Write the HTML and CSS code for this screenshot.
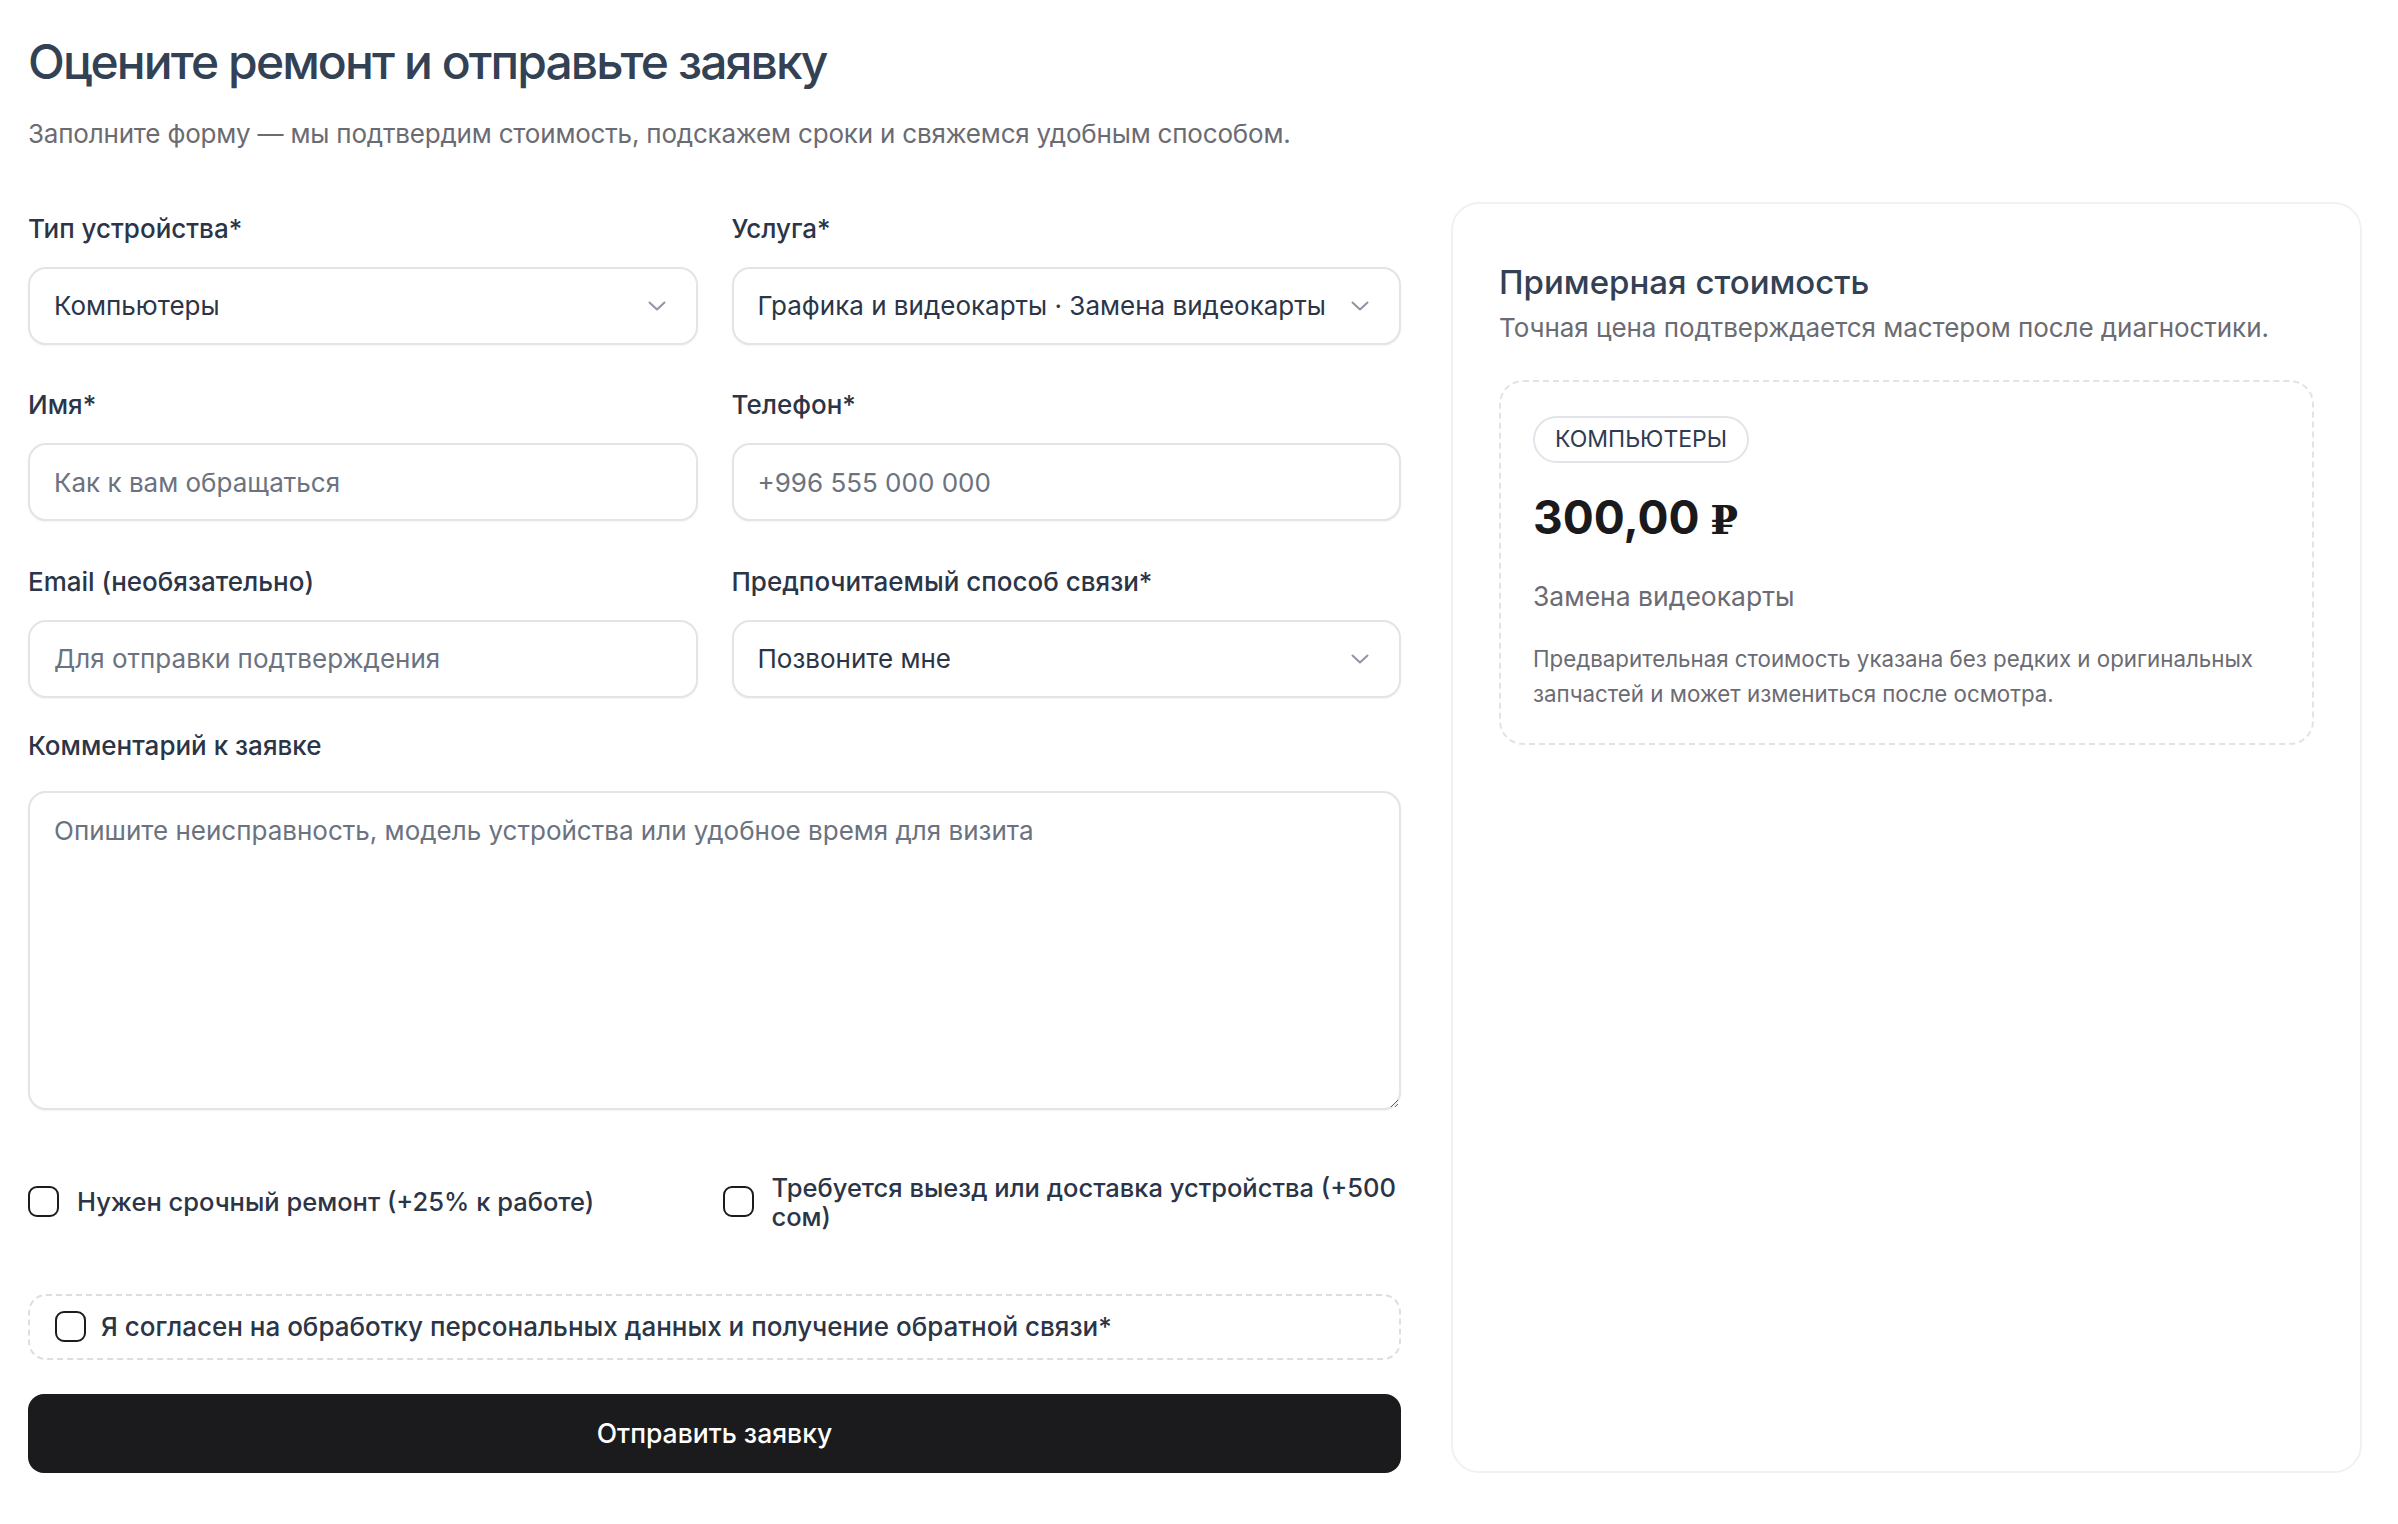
FILE: index.html
```html
<!DOCTYPE html>
<html lang="ru">
<head>
<meta charset="utf-8">
<title>Оцените ремонт и отправьте заявку</title>
<link rel="stylesheet" href="styles.css">
</head>
<body>
<div class="page">
  <header class="head">
    <h1 class="title">Оцените ремонт и отправьте заявку</h1>
    <p class="lead">Заполните форму — мы подтвердим стоимость, подскажем сроки и свяжемся удобным способом.</p>
  </header>
  <div class="layout">
    <form class="form">
      <div class="grid">
        <div class="field">
          <span class="label">Тип устройства*</span>
          <div class="control select">
            <span class="value">Компьютеры</span>
            <svg class="chev" width="18" height="10" viewBox="0 0 18 10"><path d="M1.5 1.5 L9 8.5 L16.5 1.5" fill="none" stroke="#8e95a3" stroke-width="2" stroke-linecap="round" stroke-linejoin="round"/></svg>
          </div>
        </div>
        <div class="field">
          <span class="label">Услуга*</span>
          <div class="control select">
            <span class="value">Графика и видеокарты · Замена видеокарты</span>
            <svg class="chev" width="18" height="10" viewBox="0 0 18 10"><path d="M1.5 1.5 L9 8.5 L16.5 1.5" fill="none" stroke="#8e95a3" stroke-width="2" stroke-linecap="round" stroke-linejoin="round"/></svg>
          </div>
        </div>
        <div class="field">
          <span class="label">Имя*</span>
          <input class="control input" type="text" placeholder="Как к вам обращаться">
        </div>
        <div class="field">
          <span class="label">Телефон*</span>
          <input class="control input" type="text" placeholder="+996 555 000 000">
        </div>
        <div class="field">
          <span class="label">Email (необязательно)</span>
          <input class="control input" type="text" placeholder="Для отправки подтверждения">
        </div>
        <div class="field">
          <span class="label">Предпочитаемый способ связи*</span>
          <div class="control select">
            <span class="value">Позвоните мне</span>
            <svg class="chev" width="18" height="10" viewBox="0 0 18 10"><path d="M1.5 1.5 L9 8.5 L16.5 1.5" fill="none" stroke="#8e95a3" stroke-width="2" stroke-linecap="round" stroke-linejoin="round"/></svg>
          </div>
        </div>
      </div>
      <div class="field comment">
        <span class="label">Комментарий к заявке</span>
        <textarea class="control textarea" placeholder="Опишите неисправность, модель устройства или удобное время для визита"></textarea>
      </div>
      <div class="checks">
        <label class="check"><span class="box"></span><span class="check-text">Нужен срочный ремонт (+25% к работе)</span></label>
        <label class="check"><span class="box"></span><span class="check-text">Требуется выезд или доставка устройства (+500 сом)</span></label>
      </div>
      <label class="consent"><span class="box"></span><span class="consent-text">Я согласен на обработку персональных данных и получение обратной связи*</span></label>
      <button class="submit" type="button">Отправить заявку</button>
    </form>
    <aside class="card">
      <h2 class="card-title">Примерная стоимость</h2>
      <p class="card-sub">Точная цена подтверждается мастером после диагностики.</p>
      <div class="estimate">
        <span class="pill">Компьютеры</span>
        <div class="price">300,00 <span class="rub">₽</span></div>
        <div class="service">Замена видеокарты</div>
        <p class="note">Предварительная стоимость указана без редких и оригинальных запчастей и может измениться после осмотра.</p>
      </div>
    </aside>
  </div>
</div>
</body>
</html>
```

FILE: styles.css
```css
* { box-sizing: border-box; }

html, body {
  margin: 0;
  background: #ffffff;
}

body {
  font-family: Inter, "Noto Sans", "Liberation Sans", sans-serif;
  color: #2b3547;
}

.page {
  padding: 33px 36px 40px 28px;
}

.title {
  margin: 0;
  font-size: 48px;
  line-height: 1.2;
  font-weight: 500;
  letter-spacing: -0.04em;
  color: #334155;
}

.lead {
  margin: 23px 0 0;
  font-size: 26px;
  line-height: 40px;
  letter-spacing: -0.2px;
  color: #6b6b73;
}

.layout {
  margin-top: 48px;
  display: grid;
  grid-template-columns: minmax(0, 1373px) minmax(0, 1fr);
  column-gap: 50px;
}

.form {
  display: flex;
  flex-direction: column;
  padding-top: 10px;
}

.grid {
  display: grid;
  grid-template-columns: minmax(0, 1fr) minmax(0, 1fr);
  column-gap: 34px;
  row-gap: 43.5px;
}

.field {
  display: flex;
  flex-direction: column;
  gap: 21px;
  min-width: 0;
}

.label {
  font-size: 26px;
  line-height: 34px;
  font-weight: 500;
  color: #2b3547;
}

.control {
  height: 78px;
  border: 2px solid #e4e4e7;
  border-radius: 18px;
  background: #fff;
  box-shadow: 0 1px 2px rgba(0, 0, 0, 0.05);
  font-family: inherit;
  font-size: 26px;
  color: #2b3547;
  padding: 0 24px;
}

.input {
  width: 100%;
  outline: none;
}

.input::placeholder,
.textarea::placeholder {
  color: #6b7280;
  opacity: 1;
}

.select {
  display: flex;
  align-items: center;
  justify-content: space-between;
  gap: 14px;
  padding-right: 30px;
}

.value {
  white-space: nowrap;
  overflow: hidden;
}

.chev {
  flex: none;
}

.comment {
  margin-top: 31px;
  gap: 28px;
}

.textarea {
  height: 319px;
  width: 100%;
  padding: 18px 24px;
  line-height: 40px;
  resize: vertical;
  outline: none;
}

.checks {
  display: grid;
  grid-template-columns: minmax(0, 1fr) minmax(0, 1fr);
  column-gap: 16px;
  margin: 63px 0;
}

.check {
  display: flex;
  align-items: center;
  gap: 18px;
}

.box {
  flex: none;
  width: 31px;
  height: 31px;
  border: 2.5px solid #1c1c1e;
  border-radius: 9px;
  background: #fff;
}

.check-text {
  font-size: 25.5px;
  line-height: 29px;
  font-weight: 500;
  color: #2b3547;
}

.consent {
  display: flex;
  align-items: center;
  gap: 15px;
  height: 66px;
  padding: 0 25px;
  border: 2px dashed #dedee2;
  border-radius: 18px;
}

.consent-text {
  font-size: 26px;
  line-height: 32px;
  font-weight: 500;
  color: #2b3547;
}

.submit {
  margin-top: 34px;
  height: 79px;
  border: none;
  border-radius: 16px;
  background: #1b1b1d;
  color: #ffffff;
  font-family: inherit;
  font-size: 26.5px;
  font-weight: 500;
}

.card {
  border: 2px solid #f1f1f3;
  border-radius: 28px;
  padding: 58px 46px 48px;
  background: #fff;
}

.card-title {
  margin: 0;
  font-size: 33px;
  line-height: 41px;
  font-weight: 500;
  color: #334155;
}

.card-sub {
  margin: 5px 0 0;
  font-size: 26px;
  line-height: 39px;
  letter-spacing: -0.05px;
  color: #6b6b73;
}

.estimate {
  margin-top: 33px;
  border: 2px dashed #e3e3e6;
  border-radius: 24px;
  padding: 34px 32px 32px;
}

.pill {
  display: inline-flex;
  align-items: center;
  height: 47px;
  padding: 0 20px;
  border: 2px solid #e2e4ea;
  border-radius: 999px;
  font-size: 23px;
  text-transform: uppercase;
  color: #2f3b50;
}

.price {
  margin-top: 27px;
  font-size: 46px;
  line-height: 55px;
  font-weight: 700;
  color: #1a1a1c;
}

.rub {
  font-family: "DejaVu Serif", "Liberation Serif", serif;
  font-size: 40px;
}

.service {
  margin-top: 29px;
  font-size: 26.5px;
  line-height: 40px;
  color: #6b6b73;
}

.note {
  margin: 25px 0 0;
  font-size: 22.3px;
  line-height: 35px;
  color: #6b6b73;
}
```
